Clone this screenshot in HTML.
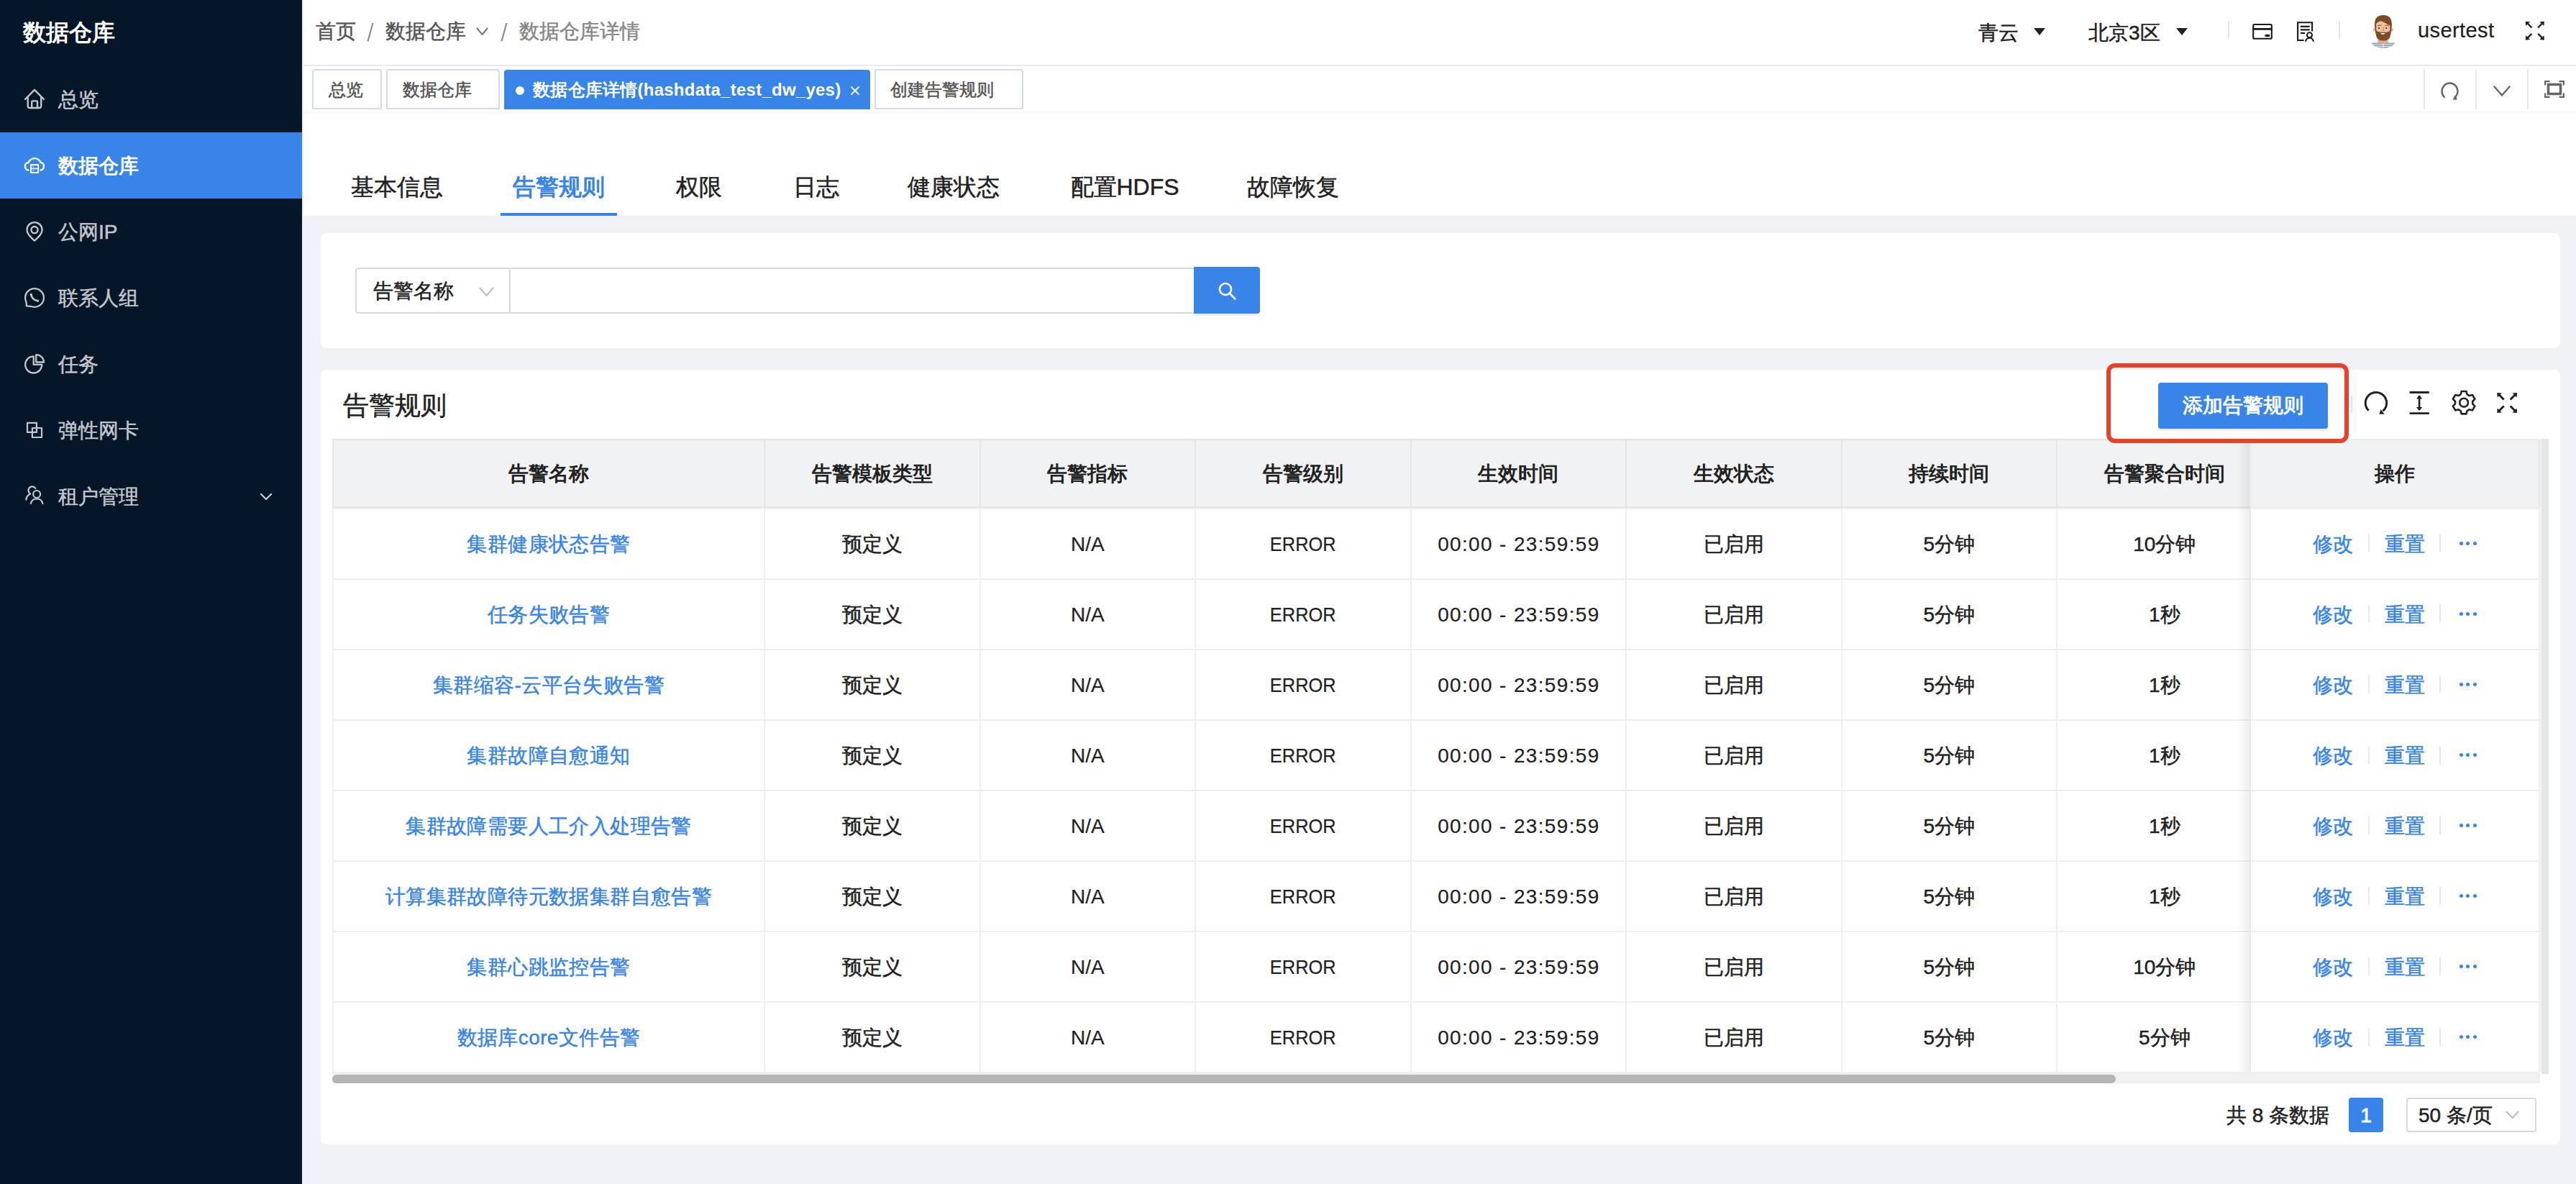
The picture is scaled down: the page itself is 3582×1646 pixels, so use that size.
<!DOCTYPE html><html><head><meta charset="utf-8"><title>告警规则</title><style>
*{box-sizing:border-box;margin:0;padding:0}
html,body{width:3582px;height:1646px;overflow:hidden}
body{position:relative;background:#f0f2f5;font-family:"Liberation Sans",sans-serif;color:#222}
.ab{position:absolute}
.t{position:absolute;white-space:nowrap;line-height:1;-webkit-text-stroke:0.5px currentColor}
.t.b{-webkit-text-stroke:0}
.t.l{-webkit-text-stroke:0.2px currentColor}
svg{position:absolute;overflow:visible}
</style></head><body>
<div class="ab" style="left:0;top:0;width:420px;height:1646px;background:#051628"></div>
<div class="ab" style="left:420px;top:0;width:2px;height:1646px;background:#eef0f3"></div>
<div class="t b" style="left:32px;top:28.7px;font-size:32px;color:#fff;font-weight:600;">数据仓库</div>
<div class="ab" style="left:0;top:184px;width:420px;height:92px;background:#3884e9"></div>
<div class="t" style="left:81px;top:124.9px;font-size:28px;color:#c3c6cc;font-weight:normal;">总览</div>
<div class="t" style="left:81px;top:216.9px;font-size:28px;color:#fff;font-weight:normal;-webkit-text-stroke:0.9px #fff">数据仓库</div>
<div class="t" style="left:81px;top:308.9px;font-size:28px;color:#c3c6cc;font-weight:normal;">公网IP</div>
<div class="t" style="left:81px;top:400.9px;font-size:28px;color:#c3c6cc;font-weight:normal;">联系人组</div>
<div class="t" style="left:81px;top:492.9px;font-size:28px;color:#c3c6cc;font-weight:normal;">任务</div>
<div class="t" style="left:81px;top:584.9px;font-size:28px;color:#c3c6cc;font-weight:normal;">弹性网卡</div>
<div class="t" style="left:81px;top:676.9px;font-size:28px;color:#c3c6cc;font-weight:normal;">租户管理</div>
<svg style="left:26px;top:110px" width="44" height="50" viewBox="0 0 44 50" fill="none" stroke="#c3c6cc" stroke-width="2.4" stroke-linecap="round" stroke-linejoin="round"><path d="M9 28 L22 14.9 L35 28"/><path d="M12.7 25.5 V37.3 Q12.7 40 15.4 40 H28.5 Q31.2 40 31.2 37.3 V25.5"/><path d="M18.2 40 V31.6 Q18.2 30.4 19.4 30.4 H24.8 Q26 30.4 26 31.6 V40"/></svg>
<svg style="left:26px;top:205px" width="44" height="50" viewBox="0 0 44 50">
<path d="M13.4 31.6 C10.6 31.1 8.9 29 8.9 26.3 C8.9 23.4 10.9 21.3 13.5 20.9 C15.2 17.2 18.4 15.1 22 15.1 C25.6 15.1 28.8 17.2 30.5 20.9 C33.1 21.3 35 23.4 35 26.3 C35 29 33.3 31.1 30.5 31.6" fill="none" stroke="#fff" stroke-width="2.4" stroke-linecap="round"/>
<rect x="16" y="23" width="12.1" height="12.9" fill="#fff"/>
<rect x="18" y="25.1" width="8.2" height="3.6" fill="#3884e9"/><rect x="18" y="30.2" width="8.2" height="3.8" fill="#3884e9"/>
<circle cx="20.2" cy="26.9" r="0.8" fill="#fff"/><circle cx="20.2" cy="32.1" r="0.8" fill="#fff"/>
</svg>
<svg style="left:26px;top:297px" width="44" height="50" viewBox="0 0 44 50" fill="none" stroke="#c3c6cc" stroke-width="2.3" stroke-linecap="round" stroke-linejoin="round"><path d="M22 37.6 C16.5 32.6 11.5 28 11.5 22.6 C11.5 16.7 16.2 12.2 22 12.2 C27.8 12.2 32.6 16.7 32.6 22.6 C32.6 28 27.5 32.6 22 37.6 Z"/><circle cx="22" cy="22.6" r="4.6"/></svg>
<svg style="left:26px;top:389px" width="44" height="50" viewBox="0 0 44 50" fill="none" stroke="#c3c6cc" stroke-width="2.3" stroke-linecap="round" stroke-linejoin="round"><path d="M16.5 36.8 C18.2 37.5 20 37.8 22 37.8 C29.1 37.8 34.9 32 34.9 25 C34.9 17.9 29.1 12.2 22 12.2 C14.9 12.2 9.1 17.9 9.1 25 C9.1 27.2 9.6 29.2 10.5 31 L10.9 36.3 Z"/><path d="M17.3 20.5 C17.8 25 21.5 28.8 26.3 29.3" stroke-width="2.6"/><circle cx="17.2" cy="20.4" r="1.7" fill="#c3c6cc" stroke="none"/><circle cx="26.4" cy="29.1" r="1.7" fill="#c3c6cc" stroke="none"/></svg>
<svg style="left:26px;top:481px" width="44" height="50" viewBox="0 0 44 50" fill="none" stroke="#c3c6cc" stroke-width="2.3" stroke-linecap="round" stroke-linejoin="round"><path d="M32.3 25.9 H20.7 V14.3 A11.6 11.6 0 1 0 32.3 25.9 Z"/><path d="M24.2 22.5 V12.2 A10.8 10.3 0 0 1 35 22.5 Z"/></svg>
<svg style="left:26px;top:573px" width="44" height="50" viewBox="0 0 44 50" fill="none" stroke="#c3c6cc" stroke-width="2.2" stroke-linecap="round" stroke-linejoin="round"><rect x="12" y="14.8" width="12.9" height="13.1"/><rect x="18.9" y="22" width="13.1" height="13"/></svg>
<svg style="left:26px;top:665px" width="44" height="50" viewBox="0 0 44 50" fill="none" stroke="#c3c6cc" stroke-width="2.2" stroke-linecap="round" stroke-linejoin="round"><circle cx="25.1" cy="22" r="5"/><path d="M16.9 35 C17.5 30.8 21 28.3 25.1 28.3 C29.2 28.3 32.7 30.8 33.4 35"/><path d="M23.3 13.8 C22.3 12.3 20.6 11.3 18.8 11.3 C15.8 11.3 13.5 13.7 13.5 16.6 C13.5 18.7 14.6 20.5 16.3 21.4 C12.8 22.8 10.7 25.8 10.3 29.6"/></svg>
<svg style="left:361px;top:685px" width="18" height="11" viewBox="0 0 18 11" fill="none" stroke="#c3c6cc" stroke-width="2.4" stroke-linecap="round" stroke-linejoin="round"><path d="M2 2 L9 9 L16 2"/></svg>
<div class="ab" style="left:422px;top:0;width:3160px;height:90px;background:#fff"></div>
<div class="ab" style="left:422px;top:90px;width:3160px;height:2px;background:#e9eaec"></div>
<div class="t" style="left:439px;top:29.9px;font-size:28px;color:#555;font-weight:normal;">首页</div>
<svg style="left:0;top:0" width="800" height="90"><path d="M518.5 32 L511.5 57.4 M704.5 32 L697.5 57.4" stroke="#8f8f8f" stroke-width="2.2"/></svg>
<div class="t" style="left:536px;top:29.9px;font-size:28px;color:#555;font-weight:normal;">数据仓库</div>
<svg style="left:662px;top:38px" width="17" height="12" viewBox="0 0 17 12" fill="none" stroke="#777" stroke-width="2" stroke-linecap="round" stroke-linejoin="round"><path d="M1.5 1.5 L8.5 10 L15.5 1.5"/></svg>
<div class="t" style="left:722px;top:29.9px;font-size:28px;color:#888;font-weight:normal;">数据仓库详情</div>
<div class="t" style="left:2751px;top:31.9px;font-size:28px;color:#222;font-weight:normal;">青云</div>
<svg style="left:2828px;top:39px" width="16" height="10" viewBox="0 0 16 10"><path d="M0 0 H16 L8 10 Z" fill="#222"/></svg>
<div class="t" style="left:2904px;top:31.9px;font-size:28px;color:#222;font-weight:normal;">北京3区</div>
<svg style="left:3026px;top:39px" width="16" height="10" viewBox="0 0 16 10"><path d="M0 0 H16 L8 10 Z" fill="#222"/></svg>
<div class="ab" style="left:3098px;top:29px;width:2px;height:25px;background:#e6e6e6"></div>
<svg style="left:3124px;top:22px" width="104" height="44" viewBox="0 0 104 44" fill="none" stroke="#1a1a1a" stroke-width="2.1" stroke-linecap="round" stroke-linejoin="round">
<rect x="9.2" y="12" width="25.6" height="19.7" rx="1.5"/><path d="M9.5 18.4 H34.5" stroke-width="2.8"/><rect x="26.3" y="26.3" width="5.4" height="2.4" fill="#1a1a1a" stroke-width="1"/>
<path d="M79.7 34 H71.1 V9.2 H91.1 V21.6" stroke-linejoin="miter" stroke-linecap="butt"/>
<path d="M75.6 14.9 H86.8 M75.6 19.4 H86.8 M75.6 24 H80.4"/>
<circle cx="87.5" cy="26.8" r="3.5"/><path d="M82.2 35 C82.9 32.3 85 30.8 87.5 30.8 C90 30.8 92.1 32.3 92.8 35"/>
</svg>
<div class="ab" style="left:3252px;top:29px;width:2px;height:25px;background:#e6e6e6"></div>
<svg style="left:3284px;top:14px" width="64" height="58" viewBox="0 0 64 58">
<circle cx="30" cy="29" r="24" fill="#fdfdfd"/>
<rect x="22.5" y="38" width="14.3" height="9.5" fill="#e2ab8a"/>
<path d="M13.5 45.6 H46.5 L43 49.5 C39 52 35 52.8 30 52.8 C25 52.8 21 52 17 49.5 Z" fill="#8fa8b8"/>
<path d="M16 47.8 H44 M19 50.4 H41" stroke="#dde6ec" stroke-width="1"/>
<path d="M30 47 V52.8" stroke="#fff" stroke-width="0.8"/>
<path d="M22.5 45.6 C25 47.5 35 47.5 36.8 45.6" fill="#e2ab8a"/>
<ellipse cx="17.3" cy="27.5" rx="1.6" ry="2.6" fill="#eab898"/><ellipse cx="42.4" cy="27.5" rx="1.6" ry="2.6" fill="#eab898"/>
<path d="M18 20 C18 11 22.5 7.1 30 7.1 C37.5 7.1 41.9 11 41.9 20 C41.9 26 40.5 33 39.5 37 C38 41 34.5 42.6 30 42.6 C25.5 42.6 22 41 20.5 37 C19.5 33 18 26 18 20 Z" fill="#7e4a28"/>
<path d="M20.2 19 C23 15.5 26.5 14.6 30 16.5 C33 18.2 36.5 19.8 39.3 21.5 V28 C38.6 30.5 35 30.8 30 30.8 C25 30.8 21 30.5 20.2 28 Z" fill="#f0c0a0"/>
<path d="M22.5 22 Q25 20.3 27.3 21.5 M32.7 21.5 Q35 20.3 37.5 22" stroke="#7e4a28" stroke-width="1.1" fill="none"/>
<circle cx="24.1" cy="25" r="1" fill="#1e1410"/><circle cx="34.3" cy="25" r="1" fill="#1e1410"/>
<path d="M29.3 23.5 L28.6 29.5 H31.4 L30.7 23.5 Z" fill="#e29a72"/>
<path d="M26 31.9 Q29.5 36 32.8 31.9 Z" fill="#fff"/>
</svg>
<div class="t l" style="left:3362px;top:27.8px;font-size:29px;color:#222;font-weight:normal;letter-spacing:0.4px">usertest</div>
<svg style="left:0;top:0" width="3582" height="1646" viewBox="0 0 3582 1646" fill="none"><path d="M3511.7 29.7 L3518.10 30.30 L3512.20 36.10 Z" fill="#222" stroke="none"/><path d="M3514.70 32.70 L3520.50 38.50" stroke="#222" stroke-width="2.4" stroke-linecap="butt"/><path d="M3537.9 29.7 L3531.50 30.30 L3537.40 36.10 Z" fill="#222" stroke="none"/><path d="M3534.90 32.70 L3529.10 38.50" stroke="#222" stroke-width="2.4" stroke-linecap="butt"/><path d="M3511.7 55.7 L3518.10 55.10 L3512.20 49.30 Z" fill="#222" stroke="none"/><path d="M3514.70 52.70 L3520.50 46.90" stroke="#222" stroke-width="2.4" stroke-linecap="butt"/><path d="M3537.9 55.7 L3531.50 55.10 L3537.40 49.30 Z" fill="#222" stroke="none"/><path d="M3534.90 52.70 L3529.10 46.90" stroke="#222" stroke-width="2.4" stroke-linecap="butt"/></svg>
<div class="ab" style="left:422px;top:92px;width:3160px;height:208px;background:#fff"></div>
<div class="ab" style="left:422px;top:155px;width:3160px;height:7px;background:linear-gradient(#f6f6f6,rgba(250,250,250,0.6) 50%,rgba(255,255,255,0))"></div>
<div class="ab" style="left:434px;top:96px;width:97px;height:56px;border:2px solid #d6dbe8;border-radius:4px 4px 0 0;background:#fff"></div>
<div class="t" style="left:457px;top:112.6px;font-size:24px;color:#555;font-weight:normal;">总览</div>
<div class="ab" style="left:537px;top:96px;width:158px;height:56px;border:2px solid #d6dbe8;border-radius:4px 4px 0 0;background:#fff"></div>
<div class="t" style="left:560px;top:112.6px;font-size:24px;color:#555;font-weight:normal;">数据仓库</div>
<div class="ab" style="left:701px;top:97px;width:509px;height:55px;background:#3884e9;border-radius:4px 4px 0 0"></div>
<div class="ab" style="left:717px;top:120px;width:12px;height:12px;border-radius:6px;background:#fff"></div>
<div class="t b" style="left:741px;top:112.6px;font-size:24px;color:#fff;font-weight:bold;letter-spacing:0.25px">数据仓库详情(hashdata_test_dw_yes)</div>
<svg style="left:1183px;top:120px" width="12" height="12" viewBox="0 0 12 12" fill="none" stroke="#fff" stroke-width="1.8" stroke-linecap="round" stroke-linejoin="round"><path d="M1 1 L11 11 M11 1 L1 11"/></svg>
<div class="ab" style="left:1216px;top:96px;width:207px;height:56px;border:2px solid #d6dbe8;border-radius:4px 4px 0 0;background:#fff"></div>
<div class="t" style="left:1238px;top:112.6px;font-size:24px;color:#555;font-weight:normal;">创建告警规则</div>
<div class="ab" style="left:3370px;top:96px;width:2px;height:56px;background:#e8e8e8"></div>
<div class="ab" style="left:3442px;top:96px;width:2px;height:56px;background:#e8e8e8"></div>
<div class="ab" style="left:3514px;top:96px;width:2px;height:56px;background:#e8e8e8"></div>
<svg style="left:3394px;top:114px" width="26" height="26" viewBox="0 0 26 26" fill="none" stroke="#666" stroke-width="2.4" stroke-linecap="round" stroke-linejoin="round"><path d="M5 21 C2.5 18.5 1.5 16 1.5 13 C1.5 6.5 6.5 1.5 12.5 1.5 C18.5 1.5 23.5 6.5 23.5 13 C23.5 16 22 19 19.5 21"/><path d="M17.5 24 L22 24.2 L21 19.5 Z" fill="#666" stroke-width="1"/></svg>
<svg style="left:3467px;top:119px" width="24" height="15" viewBox="0 0 24 15" fill="none" stroke="#666" stroke-width="2.4" stroke-linecap="round" stroke-linejoin="round"><path d="M1.5 1.5 L12 13.5 L22.5 1.5"/></svg>
<svg style="left:3538px;top:112px" width="28" height="24" viewBox="0 0 28 24" fill="none" stroke="#666" stroke-width="2.2">
<path d="M1.1 6.5 V1.1 H7.5 M20.5 1.1 H26.9 V6.5 M1.1 17.5 V22.9 H7.5 M20.5 22.9 H26.9 V17.5"/>
<rect x="5.5" y="5.5" width="17" height="13" stroke-width="3.5"/></svg>
<div class="t" style="left:487.5px;top:244.2px;font-size:32px;color:#222;font-weight:normal;">基本信息</div>
<div class="t b" style="left:713px;top:244.2px;font-size:32px;color:#3884e9;font-weight:bold;">告警规则</div>
<div class="t" style="left:940px;top:244.2px;font-size:32px;color:#222;font-weight:normal;">权限</div>
<div class="t" style="left:1103px;top:244.2px;font-size:32px;color:#222;font-weight:normal;">日志</div>
<div class="t" style="left:1262px;top:244.2px;font-size:32px;color:#222;font-weight:normal;">健康状态</div>
<div class="t" style="left:1488.5px;top:244.2px;font-size:32px;color:#222;font-weight:normal;">配置HDFS</div>
<div class="t" style="left:1733.5px;top:244.2px;font-size:32px;color:#222;font-weight:normal;">故障恢复</div>
<div class="ab" style="left:696px;top:296px;width:162px;height:4px;background:#3884e9"></div>
<div class="ab" style="left:446px;top:324px;width:3114px;height:160px;background:#fff;border-radius:8px"></div>
<div class="ab" style="left:494px;top:372px;width:216px;height:64px;border:2px solid #d9d9d9;border-radius:4px 0 0 4px"></div>
<div class="t" style="left:519px;top:390.9px;font-size:28px;color:#222;font-weight:normal;">告警名称</div>
<svg style="left:666px;top:399px" width="21" height="14" viewBox="0 0 21 14" fill="none" stroke="#bbb" stroke-width="2" stroke-linecap="round" stroke-linejoin="round"><path d="M1.5 1.5 L10.5 12 L19.5 1.5"/></svg>
<div class="ab" style="left:708px;top:372px;width:954px;height:64px;border:2px solid #d9d9d9;border-left:none"></div>
<div class="ab" style="left:1660px;top:371px;width:92px;height:65px;background:#3884e9;border-radius:0 4px 4px 0;box-shadow:0 3px 0 #efefef"></div>
<svg style="left:1694px;top:392px" width="26" height="26" viewBox="0 0 26 26" fill="none" stroke="#fff" stroke-width="2.6" stroke-linecap="round" stroke-linejoin="round"><circle cx="10" cy="10" r="8"/><path d="M16 16 L23.5 23.5"/></svg>
<div class="ab" style="left:446px;top:514px;width:3114px;height:1077px;background:#fff;border-radius:8px"></div>
<div class="t" style="left:477px;top:545.8px;font-size:36px;color:#222;font-weight:normal;">告警规则</div>
<div class="ab" style="left:3001px;top:532px;width:236px;height:64px;background:#3884e9;border-radius:4px;box-shadow:0 3px 0 #efefef"></div>
<div class="t" style="left:3001px;width:236px;text-align:center;top:550.0px;font-size:28px;color:#fff;font-weight:normal;-webkit-text-stroke:0.9px #fff">添加告警规则</div>
<div class="ab" style="left:3269px;top:550px;width:2px;height:24px;background:#e6e6e6"></div>
<svg style="left:0;top:0" width="3582" height="1646" viewBox="0 0 3582 1646" fill="none" stroke="#222" stroke-linejoin="round">
<path d="M3293.7 570.7 A14.7 14.7 0 1 1 3313.5 571.3" stroke-width="3"/>
<path d="M3310.5 568.9 L3308.4 575.7 L3315.7 575.7 Z" fill="#222" stroke="none"/>
<path d="M3350.7 545.5 H3377.8 M3350.7 574.7 H3377.8" stroke-width="2.8"/>
<path d="M3364.1 550 V570" stroke-width="2.7"/>
<path d="M3364.1 549.2 L3368.3 554.6 H3359.9 Z M3364.1 571 L3368.3 565.9 H3359.9 Z" fill="#222" stroke="none"/>
<path d="M3430.67 548.39 L3429.43 544.05 L3422.77 544.05 L3421.53 548.39 L3418.59 550.09 L3414.21 548.99 L3410.88 554.76 L3414.02 558.00 L3414.02 561.40 L3410.88 564.64 L3414.21 570.41 L3418.59 569.31 L3421.53 571.01 L3422.77 575.35 L3429.43 575.35 L3430.67 571.01 L3433.61 569.31 L3437.99 570.41 L3441.32 564.64 L3438.18 561.40 L3438.18 558.00 L3441.32 554.76 L3437.99 548.99 L3433.61 550.09 Z" stroke-width="2.6"/>
<circle cx="3426.1" cy="559.7" r="5.9" stroke-width="2.6"/>
</svg>
<svg style="left:0;top:0" width="3582" height="1646" viewBox="0 0 3582 1646" fill="none"><path d="M3472.2 546 L3478.80 546.60 L3472.70 552.60 Z" fill="#222" stroke="none"/><path d="M3475.20 549.00 L3481.70 555.50" stroke="#222" stroke-width="3" stroke-linecap="butt"/><path d="M3500.1 546 L3493.50 546.60 L3499.60 552.60 Z" fill="#222" stroke="none"/><path d="M3497.10 549.00 L3490.60 555.50" stroke="#222" stroke-width="3" stroke-linecap="butt"/><path d="M3472.2 574 L3478.80 573.40 L3472.70 567.40 Z" fill="#222" stroke="none"/><path d="M3475.20 571.00 L3481.70 564.50" stroke="#222" stroke-width="3" stroke-linecap="butt"/><path d="M3500.1 574 L3493.50 573.40 L3499.60 567.40 Z" fill="#222" stroke="none"/><path d="M3497.10 571.00 L3490.60 564.50" stroke="#222" stroke-width="3" stroke-linecap="butt"/></svg>
<div class="ab" style="left:462px;top:610px;width:3070px;height:96px;background:#f1f2f4"></div>
<div class="ab" style="left:462px;top:610px;width:3070px;height:2px;background:#e4e6e6"></div>
<div class="ab" style="left:462px;top:704px;width:3070px;height:2px;background:#e4e6e6"></div>
<div class="ab" style="left:462px;top:706px;width:3070px;height:2px;background:#efefef"></div>
<div class="ab" style="left:462px;top:804px;width:3070px;height:2px;background:#efefef"></div>
<div class="ab" style="left:462px;top:902px;width:3070px;height:2px;background:#efefef"></div>
<div class="ab" style="left:462px;top:1000px;width:3070px;height:2px;background:#efefef"></div>
<div class="ab" style="left:462px;top:1098px;width:3070px;height:2px;background:#efefef"></div>
<div class="ab" style="left:462px;top:1196px;width:3070px;height:2px;background:#efefef"></div>
<div class="ab" style="left:462px;top:1294px;width:3070px;height:2px;background:#efefef"></div>
<div class="ab" style="left:462px;top:1392px;width:3070px;height:2px;background:#efefef"></div>
<div class="ab" style="left:462px;top:612px;width:2px;height:92px;background:#e4e6e6"></div>
<div class="ab" style="left:462px;top:706px;width:2px;height:784px;background:#efefef"></div>
<div class="ab" style="left:1062px;top:612px;width:2px;height:92px;background:#e4e6e6"></div>
<div class="ab" style="left:1062px;top:706px;width:2px;height:784px;background:#efefef"></div>
<div class="ab" style="left:1361.5px;top:612px;width:2px;height:92px;background:#e4e6e6"></div>
<div class="ab" style="left:1361.5px;top:706px;width:2px;height:784px;background:#efefef"></div>
<div class="ab" style="left:1661px;top:612px;width:2px;height:92px;background:#e4e6e6"></div>
<div class="ab" style="left:1661px;top:706px;width:2px;height:784px;background:#efefef"></div>
<div class="ab" style="left:1960.5px;top:612px;width:2px;height:92px;background:#e4e6e6"></div>
<div class="ab" style="left:1960.5px;top:706px;width:2px;height:784px;background:#efefef"></div>
<div class="ab" style="left:2260px;top:612px;width:2px;height:92px;background:#e4e6e6"></div>
<div class="ab" style="left:2260px;top:706px;width:2px;height:784px;background:#efefef"></div>
<div class="ab" style="left:2559.5px;top:612px;width:2px;height:92px;background:#e4e6e6"></div>
<div class="ab" style="left:2559.5px;top:706px;width:2px;height:784px;background:#efefef"></div>
<div class="ab" style="left:2859px;top:612px;width:2px;height:92px;background:#e4e6e6"></div>
<div class="ab" style="left:2859px;top:706px;width:2px;height:784px;background:#efefef"></div>
<div class="t b" style="left:464px;width:598px;text-align:center;top:644.9px;font-size:28px;color:#222;font-weight:bold;">告警名称</div>
<div class="t b" style="left:1064px;width:297.5px;text-align:center;top:644.9px;font-size:28px;color:#222;font-weight:bold;">告警模板类型</div>
<div class="t b" style="left:1363.5px;width:297.5px;text-align:center;top:644.9px;font-size:28px;color:#222;font-weight:bold;">告警指标</div>
<div class="t b" style="left:1663px;width:297.5px;text-align:center;top:644.9px;font-size:28px;color:#222;font-weight:bold;">告警级别</div>
<div class="t b" style="left:1962.5px;width:297.5px;text-align:center;top:644.9px;font-size:28px;color:#222;font-weight:bold;">生效时间</div>
<div class="t b" style="left:2262px;width:297.5px;text-align:center;top:644.9px;font-size:28px;color:#222;font-weight:bold;">生效状态</div>
<div class="t b" style="left:2561.5px;width:297.5px;text-align:center;top:644.9px;font-size:28px;color:#222;font-weight:bold;">持续时间</div>
<div class="t b" style="left:2861px;width:297.5px;text-align:center;top:644.9px;font-size:28px;color:#222;font-weight:bold;">告警聚合时间</div>
<div class="t" style="left:464px;width:598px;text-align:center;top:742.9px;font-size:28px;color:#3884e9;font-weight:normal;letter-spacing:0.4px">集群健康状态告警</div>
<div class="t" style="left:1064px;width:297.5px;text-align:center;top:742.9px;font-size:28px;color:#222;font-weight:normal;">预定义</div>
<div class="t l" style="left:1363.5px;width:297.5px;text-align:center;top:742.9px;font-size:28px;color:#222;font-weight:normal;">N/A</div>
<div class="t l" style="left:1663px;width:297.5px;text-align:center;top:742.9px;font-size:28px;color:#222;font-weight:normal;transform:scaleX(0.91)">ERROR</div>
<div class="t l" style="left:1962.5px;width:297.5px;text-align:center;top:742.9px;font-size:28px;color:#222;font-weight:normal;letter-spacing:1.35px;text-indent:1.35px">00:00 - 23:59:59</div>
<div class="t" style="left:2262px;width:297.5px;text-align:center;top:742.9px;font-size:28px;color:#222;font-weight:normal;">已启用</div>
<div class="t" style="left:2561.5px;width:297.5px;text-align:center;top:742.9px;font-size:28px;color:#222;font-weight:normal;">5分钟</div>
<div class="t" style="left:2861px;width:297.5px;text-align:center;top:742.9px;font-size:28px;color:#222;font-weight:normal;">10分钟</div>
<div class="t" style="left:464px;width:598px;text-align:center;top:840.9px;font-size:28px;color:#3884e9;font-weight:normal;letter-spacing:0.4px">任务失败告警</div>
<div class="t" style="left:1064px;width:297.5px;text-align:center;top:840.9px;font-size:28px;color:#222;font-weight:normal;">预定义</div>
<div class="t l" style="left:1363.5px;width:297.5px;text-align:center;top:840.9px;font-size:28px;color:#222;font-weight:normal;">N/A</div>
<div class="t l" style="left:1663px;width:297.5px;text-align:center;top:840.9px;font-size:28px;color:#222;font-weight:normal;transform:scaleX(0.91)">ERROR</div>
<div class="t l" style="left:1962.5px;width:297.5px;text-align:center;top:840.9px;font-size:28px;color:#222;font-weight:normal;letter-spacing:1.35px;text-indent:1.35px">00:00 - 23:59:59</div>
<div class="t" style="left:2262px;width:297.5px;text-align:center;top:840.9px;font-size:28px;color:#222;font-weight:normal;">已启用</div>
<div class="t" style="left:2561.5px;width:297.5px;text-align:center;top:840.9px;font-size:28px;color:#222;font-weight:normal;">5分钟</div>
<div class="t" style="left:2861px;width:297.5px;text-align:center;top:840.9px;font-size:28px;color:#222;font-weight:normal;">1秒</div>
<div class="t" style="left:464px;width:598px;text-align:center;top:938.9px;font-size:28px;color:#3884e9;font-weight:normal;letter-spacing:0.4px">集群缩容-云平台失败告警</div>
<div class="t" style="left:1064px;width:297.5px;text-align:center;top:938.9px;font-size:28px;color:#222;font-weight:normal;">预定义</div>
<div class="t l" style="left:1363.5px;width:297.5px;text-align:center;top:938.9px;font-size:28px;color:#222;font-weight:normal;">N/A</div>
<div class="t l" style="left:1663px;width:297.5px;text-align:center;top:938.9px;font-size:28px;color:#222;font-weight:normal;transform:scaleX(0.91)">ERROR</div>
<div class="t l" style="left:1962.5px;width:297.5px;text-align:center;top:938.9px;font-size:28px;color:#222;font-weight:normal;letter-spacing:1.35px;text-indent:1.35px">00:00 - 23:59:59</div>
<div class="t" style="left:2262px;width:297.5px;text-align:center;top:938.9px;font-size:28px;color:#222;font-weight:normal;">已启用</div>
<div class="t" style="left:2561.5px;width:297.5px;text-align:center;top:938.9px;font-size:28px;color:#222;font-weight:normal;">5分钟</div>
<div class="t" style="left:2861px;width:297.5px;text-align:center;top:938.9px;font-size:28px;color:#222;font-weight:normal;">1秒</div>
<div class="t" style="left:464px;width:598px;text-align:center;top:1036.9px;font-size:28px;color:#3884e9;font-weight:normal;letter-spacing:0.4px">集群故障自愈通知</div>
<div class="t" style="left:1064px;width:297.5px;text-align:center;top:1036.9px;font-size:28px;color:#222;font-weight:normal;">预定义</div>
<div class="t l" style="left:1363.5px;width:297.5px;text-align:center;top:1036.9px;font-size:28px;color:#222;font-weight:normal;">N/A</div>
<div class="t l" style="left:1663px;width:297.5px;text-align:center;top:1036.9px;font-size:28px;color:#222;font-weight:normal;transform:scaleX(0.91)">ERROR</div>
<div class="t l" style="left:1962.5px;width:297.5px;text-align:center;top:1036.9px;font-size:28px;color:#222;font-weight:normal;letter-spacing:1.35px;text-indent:1.35px">00:00 - 23:59:59</div>
<div class="t" style="left:2262px;width:297.5px;text-align:center;top:1036.9px;font-size:28px;color:#222;font-weight:normal;">已启用</div>
<div class="t" style="left:2561.5px;width:297.5px;text-align:center;top:1036.9px;font-size:28px;color:#222;font-weight:normal;">5分钟</div>
<div class="t" style="left:2861px;width:297.5px;text-align:center;top:1036.9px;font-size:28px;color:#222;font-weight:normal;">1秒</div>
<div class="t" style="left:464px;width:598px;text-align:center;top:1134.9px;font-size:28px;color:#3884e9;font-weight:normal;letter-spacing:0.4px">集群故障需要人工介入处理告警</div>
<div class="t" style="left:1064px;width:297.5px;text-align:center;top:1134.9px;font-size:28px;color:#222;font-weight:normal;">预定义</div>
<div class="t l" style="left:1363.5px;width:297.5px;text-align:center;top:1134.9px;font-size:28px;color:#222;font-weight:normal;">N/A</div>
<div class="t l" style="left:1663px;width:297.5px;text-align:center;top:1134.9px;font-size:28px;color:#222;font-weight:normal;transform:scaleX(0.91)">ERROR</div>
<div class="t l" style="left:1962.5px;width:297.5px;text-align:center;top:1134.9px;font-size:28px;color:#222;font-weight:normal;letter-spacing:1.35px;text-indent:1.35px">00:00 - 23:59:59</div>
<div class="t" style="left:2262px;width:297.5px;text-align:center;top:1134.9px;font-size:28px;color:#222;font-weight:normal;">已启用</div>
<div class="t" style="left:2561.5px;width:297.5px;text-align:center;top:1134.9px;font-size:28px;color:#222;font-weight:normal;">5分钟</div>
<div class="t" style="left:2861px;width:297.5px;text-align:center;top:1134.9px;font-size:28px;color:#222;font-weight:normal;">1秒</div>
<div class="t" style="left:464px;width:598px;text-align:center;top:1232.9px;font-size:28px;color:#3884e9;font-weight:normal;letter-spacing:0.4px">计算集群故障待元数据集群自愈告警</div>
<div class="t" style="left:1064px;width:297.5px;text-align:center;top:1232.9px;font-size:28px;color:#222;font-weight:normal;">预定义</div>
<div class="t l" style="left:1363.5px;width:297.5px;text-align:center;top:1232.9px;font-size:28px;color:#222;font-weight:normal;">N/A</div>
<div class="t l" style="left:1663px;width:297.5px;text-align:center;top:1232.9px;font-size:28px;color:#222;font-weight:normal;transform:scaleX(0.91)">ERROR</div>
<div class="t l" style="left:1962.5px;width:297.5px;text-align:center;top:1232.9px;font-size:28px;color:#222;font-weight:normal;letter-spacing:1.35px;text-indent:1.35px">00:00 - 23:59:59</div>
<div class="t" style="left:2262px;width:297.5px;text-align:center;top:1232.9px;font-size:28px;color:#222;font-weight:normal;">已启用</div>
<div class="t" style="left:2561.5px;width:297.5px;text-align:center;top:1232.9px;font-size:28px;color:#222;font-weight:normal;">5分钟</div>
<div class="t" style="left:2861px;width:297.5px;text-align:center;top:1232.9px;font-size:28px;color:#222;font-weight:normal;">1秒</div>
<div class="t" style="left:464px;width:598px;text-align:center;top:1330.9px;font-size:28px;color:#3884e9;font-weight:normal;letter-spacing:0.4px">集群心跳监控告警</div>
<div class="t" style="left:1064px;width:297.5px;text-align:center;top:1330.9px;font-size:28px;color:#222;font-weight:normal;">预定义</div>
<div class="t l" style="left:1363.5px;width:297.5px;text-align:center;top:1330.9px;font-size:28px;color:#222;font-weight:normal;">N/A</div>
<div class="t l" style="left:1663px;width:297.5px;text-align:center;top:1330.9px;font-size:28px;color:#222;font-weight:normal;transform:scaleX(0.91)">ERROR</div>
<div class="t l" style="left:1962.5px;width:297.5px;text-align:center;top:1330.9px;font-size:28px;color:#222;font-weight:normal;letter-spacing:1.35px;text-indent:1.35px">00:00 - 23:59:59</div>
<div class="t" style="left:2262px;width:297.5px;text-align:center;top:1330.9px;font-size:28px;color:#222;font-weight:normal;">已启用</div>
<div class="t" style="left:2561.5px;width:297.5px;text-align:center;top:1330.9px;font-size:28px;color:#222;font-weight:normal;">5分钟</div>
<div class="t" style="left:2861px;width:297.5px;text-align:center;top:1330.9px;font-size:28px;color:#222;font-weight:normal;">10分钟</div>
<div class="t" style="left:464px;width:598px;text-align:center;top:1428.9px;font-size:28px;color:#3884e9;font-weight:normal;letter-spacing:0.4px">数据库core文件告警</div>
<div class="t" style="left:1064px;width:297.5px;text-align:center;top:1428.9px;font-size:28px;color:#222;font-weight:normal;">预定义</div>
<div class="t l" style="left:1363.5px;width:297.5px;text-align:center;top:1428.9px;font-size:28px;color:#222;font-weight:normal;">N/A</div>
<div class="t l" style="left:1663px;width:297.5px;text-align:center;top:1428.9px;font-size:28px;color:#222;font-weight:normal;transform:scaleX(0.91)">ERROR</div>
<div class="t l" style="left:1962.5px;width:297.5px;text-align:center;top:1428.9px;font-size:28px;color:#222;font-weight:normal;letter-spacing:1.35px;text-indent:1.35px">00:00 - 23:59:59</div>
<div class="t" style="left:2262px;width:297.5px;text-align:center;top:1428.9px;font-size:28px;color:#222;font-weight:normal;">已启用</div>
<div class="t" style="left:2561.5px;width:297.5px;text-align:center;top:1428.9px;font-size:28px;color:#222;font-weight:normal;">5分钟</div>
<div class="t" style="left:2861px;width:297.5px;text-align:center;top:1428.9px;font-size:28px;color:#222;font-weight:normal;">5分钟</div>
<div class="ab" style="left:3112px;top:610px;width:16px;height:880px;background:linear-gradient(90deg,rgba(0,0,0,0),rgba(0,0,0,0.07))"></div>
<div class="ab" style="left:3128px;top:610px;width:404px;height:880px;background:#fff"></div>
<div class="ab" style="left:3128px;top:610px;width:402px;height:96px;background:#f1f2f4"></div>
<div class="ab" style="left:3128px;top:610px;width:406px;height:2px;background:#ebecec"></div>
<div class="ab" style="left:3128px;top:704px;width:402px;height:4px;background:#eeeeee"></div>
<div class="ab" style="left:3128px;top:612px;width:2px;height:878px;background:#eaeaea"></div>
<div class="ab" style="left:3130px;top:706px;width:400px;height:2px;background:#efefef"></div>
<div class="ab" style="left:3130px;top:804px;width:400px;height:2px;background:#efefef"></div>
<div class="ab" style="left:3130px;top:902px;width:400px;height:2px;background:#efefef"></div>
<div class="ab" style="left:3130px;top:1000px;width:400px;height:2px;background:#efefef"></div>
<div class="ab" style="left:3130px;top:1098px;width:400px;height:2px;background:#efefef"></div>
<div class="ab" style="left:3130px;top:1196px;width:400px;height:2px;background:#efefef"></div>
<div class="ab" style="left:3130px;top:1294px;width:400px;height:2px;background:#efefef"></div>
<div class="ab" style="left:3130px;top:1392px;width:400px;height:2px;background:#efefef"></div>
<div class="t b" style="left:3130px;width:400px;text-align:center;top:644.9px;font-size:28px;color:#222;font-weight:bold;">操作</div>
<div class="t" style="left:3216px;top:742.9px;font-size:28px;color:#3884e9;font-weight:normal;">修改</div>
<div class="ab" style="left:3293px;top:743px;width:2px;height:25px;background:#e8e8e8"></div>
<div class="t" style="left:3316px;top:742.9px;font-size:28px;color:#3884e9;font-weight:normal;">重置</div>
<div class="ab" style="left:3392px;top:743px;width:2px;height:25px;background:#e8e8e8"></div>
<div class="ab" style="left:3420.0px;top:753px;width:5px;height:5px;border-radius:3px;background:#3884e9"></div>
<div class="ab" style="left:3429.3px;top:753px;width:5px;height:5px;border-radius:3px;background:#3884e9"></div>
<div class="ab" style="left:3438.6px;top:753px;width:5px;height:5px;border-radius:3px;background:#3884e9"></div>
<div class="t" style="left:3216px;top:840.9px;font-size:28px;color:#3884e9;font-weight:normal;">修改</div>
<div class="ab" style="left:3293px;top:841px;width:2px;height:25px;background:#e8e8e8"></div>
<div class="t" style="left:3316px;top:840.9px;font-size:28px;color:#3884e9;font-weight:normal;">重置</div>
<div class="ab" style="left:3392px;top:841px;width:2px;height:25px;background:#e8e8e8"></div>
<div class="ab" style="left:3420.0px;top:851px;width:5px;height:5px;border-radius:3px;background:#3884e9"></div>
<div class="ab" style="left:3429.3px;top:851px;width:5px;height:5px;border-radius:3px;background:#3884e9"></div>
<div class="ab" style="left:3438.6px;top:851px;width:5px;height:5px;border-radius:3px;background:#3884e9"></div>
<div class="t" style="left:3216px;top:938.9px;font-size:28px;color:#3884e9;font-weight:normal;">修改</div>
<div class="ab" style="left:3293px;top:939px;width:2px;height:25px;background:#e8e8e8"></div>
<div class="t" style="left:3316px;top:938.9px;font-size:28px;color:#3884e9;font-weight:normal;">重置</div>
<div class="ab" style="left:3392px;top:939px;width:2px;height:25px;background:#e8e8e8"></div>
<div class="ab" style="left:3420.0px;top:949px;width:5px;height:5px;border-radius:3px;background:#3884e9"></div>
<div class="ab" style="left:3429.3px;top:949px;width:5px;height:5px;border-radius:3px;background:#3884e9"></div>
<div class="ab" style="left:3438.6px;top:949px;width:5px;height:5px;border-radius:3px;background:#3884e9"></div>
<div class="t" style="left:3216px;top:1036.9px;font-size:28px;color:#3884e9;font-weight:normal;">修改</div>
<div class="ab" style="left:3293px;top:1037px;width:2px;height:25px;background:#e8e8e8"></div>
<div class="t" style="left:3316px;top:1036.9px;font-size:28px;color:#3884e9;font-weight:normal;">重置</div>
<div class="ab" style="left:3392px;top:1037px;width:2px;height:25px;background:#e8e8e8"></div>
<div class="ab" style="left:3420.0px;top:1047px;width:5px;height:5px;border-radius:3px;background:#3884e9"></div>
<div class="ab" style="left:3429.3px;top:1047px;width:5px;height:5px;border-radius:3px;background:#3884e9"></div>
<div class="ab" style="left:3438.6px;top:1047px;width:5px;height:5px;border-radius:3px;background:#3884e9"></div>
<div class="t" style="left:3216px;top:1134.9px;font-size:28px;color:#3884e9;font-weight:normal;">修改</div>
<div class="ab" style="left:3293px;top:1135px;width:2px;height:25px;background:#e8e8e8"></div>
<div class="t" style="left:3316px;top:1134.9px;font-size:28px;color:#3884e9;font-weight:normal;">重置</div>
<div class="ab" style="left:3392px;top:1135px;width:2px;height:25px;background:#e8e8e8"></div>
<div class="ab" style="left:3420.0px;top:1145px;width:5px;height:5px;border-radius:3px;background:#3884e9"></div>
<div class="ab" style="left:3429.3px;top:1145px;width:5px;height:5px;border-radius:3px;background:#3884e9"></div>
<div class="ab" style="left:3438.6px;top:1145px;width:5px;height:5px;border-radius:3px;background:#3884e9"></div>
<div class="t" style="left:3216px;top:1232.9px;font-size:28px;color:#3884e9;font-weight:normal;">修改</div>
<div class="ab" style="left:3293px;top:1233px;width:2px;height:25px;background:#e8e8e8"></div>
<div class="t" style="left:3316px;top:1232.9px;font-size:28px;color:#3884e9;font-weight:normal;">重置</div>
<div class="ab" style="left:3392px;top:1233px;width:2px;height:25px;background:#e8e8e8"></div>
<div class="ab" style="left:3420.0px;top:1243px;width:5px;height:5px;border-radius:3px;background:#3884e9"></div>
<div class="ab" style="left:3429.3px;top:1243px;width:5px;height:5px;border-radius:3px;background:#3884e9"></div>
<div class="ab" style="left:3438.6px;top:1243px;width:5px;height:5px;border-radius:3px;background:#3884e9"></div>
<div class="t" style="left:3216px;top:1330.9px;font-size:28px;color:#3884e9;font-weight:normal;">修改</div>
<div class="ab" style="left:3293px;top:1331px;width:2px;height:25px;background:#e8e8e8"></div>
<div class="t" style="left:3316px;top:1330.9px;font-size:28px;color:#3884e9;font-weight:normal;">重置</div>
<div class="ab" style="left:3392px;top:1331px;width:2px;height:25px;background:#e8e8e8"></div>
<div class="ab" style="left:3420.0px;top:1341px;width:5px;height:5px;border-radius:3px;background:#3884e9"></div>
<div class="ab" style="left:3429.3px;top:1341px;width:5px;height:5px;border-radius:3px;background:#3884e9"></div>
<div class="ab" style="left:3438.6px;top:1341px;width:5px;height:5px;border-radius:3px;background:#3884e9"></div>
<div class="t" style="left:3216px;top:1428.9px;font-size:28px;color:#3884e9;font-weight:normal;">修改</div>
<div class="ab" style="left:3293px;top:1429px;width:2px;height:25px;background:#e8e8e8"></div>
<div class="t" style="left:3316px;top:1428.9px;font-size:28px;color:#3884e9;font-weight:normal;">重置</div>
<div class="ab" style="left:3392px;top:1429px;width:2px;height:25px;background:#e8e8e8"></div>
<div class="ab" style="left:3420.0px;top:1439px;width:5px;height:5px;border-radius:3px;background:#3884e9"></div>
<div class="ab" style="left:3429.3px;top:1439px;width:5px;height:5px;border-radius:3px;background:#3884e9"></div>
<div class="ab" style="left:3438.6px;top:1439px;width:5px;height:5px;border-radius:3px;background:#3884e9"></div>
<div class="ab" style="left:3530px;top:610px;width:4px;height:880px;background:#f2f2f2"></div>
<div class="ab" style="left:3530px;top:612px;width:2px;height:92px;background:#e6e7e8"></div>
<div class="ab" style="left:3534px;top:610px;width:10px;height:883px;background:#e5e6e8"></div>
<div class="ab" style="left:462px;top:1490px;width:3070px;height:16px;background:#f0f0f0"></div>
<div class="ab" style="left:462px;top:1494px;width:2480px;height:12px;border-radius:6px;background:#b5b5b5"></div>
<div class="t" style="left:3096px;top:1537.4px;font-size:28px;color:#222;font-weight:normal;">共 8 条数据</div>
<div class="ab" style="left:3266px;top:1526px;width:48px;height:48px;background:#3884e9;border-radius:4px"></div>
<div class="t l" style="left:3266px;width:48px;text-align:center;top:1536.9px;font-size:28px;color:#fff;font-weight:normal;-webkit-text-stroke:0.8px #fff">1</div>
<div class="ab" style="left:3346px;top:1526px;width:181px;height:48px;border:2px solid #d9d9d9;border-radius:4px"></div>
<div class="t" style="left:3363px;top:1536.9px;font-size:28px;color:#222;font-weight:normal;">50 条/页</div>
<svg style="left:3484px;top:1544px" width="19" height="12" viewBox="0 0 19 12" fill="none" stroke="#bbb" stroke-width="2" stroke-linecap="round" stroke-linejoin="round"><path d="M1.5 1.5 L9.5 10 L17.5 1.5"/></svg>
<div class="ab" style="left:2929px;top:505px;width:337px;height:111px;border:6px solid #e8412a;border-radius:12px"></div>
</body></html>
